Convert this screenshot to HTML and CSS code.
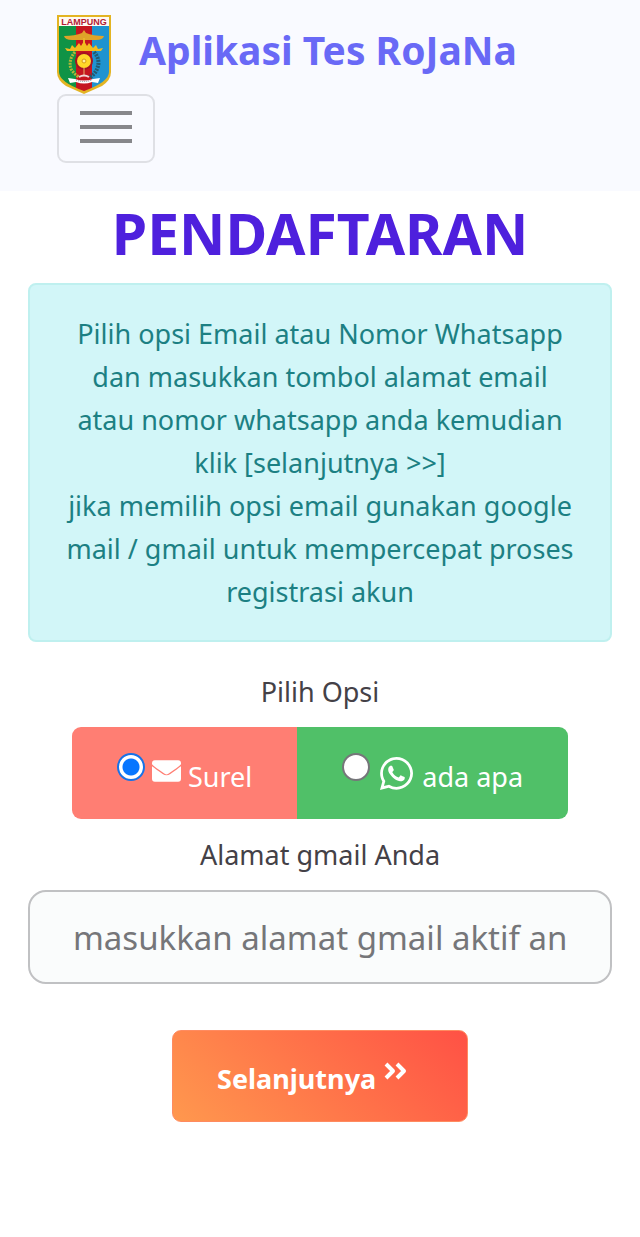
FILE: index.html
```html
<!DOCTYPE html>
<html lang="id">
<head>
<meta charset="utf-8">
<meta name="viewport" content="width=device-width, initial-scale=1">
<title>Aplikasi Tes RoJaNa</title>
<link rel="stylesheet" href="styles.css">
</head>
<body>
<header class="navbar">
  <a class="brand" href="#">
    <svg class="brand-logo" viewBox="0 0 54 80" role="img" aria-label="Lampung">
      <defs>
        <clipPath id="shield"><path d="M2 12H52V58Q52 68 27 77Q2 68 2 58Z"/></clipPath>
      </defs>
      <path d="M0 1H54V58Q54 66 45 72L27 80L9 72Q0 66 0 58Z" fill="#e3b423"/>
      <g clip-path="url(#shield)">
        <path d="M2 12H19V80H2Z" fill="#0f9346"/>
        <path d="M19 12H35V80H19Z" fill="#c5151f"/>
        <path d="M35 12H52V80H35Z" fill="#1f93d0"/>
      </g>
      <path d="M2 3H52V12H2Z" fill="#fffaf2"/>
      <text class="logo-text" x="27" y="11" text-anchor="middle">LAMPUNG</text>
      <path d="M7 22Q18 22 25 19L27 16L29 19Q36 22 47 22Q46 26 39 26H15Q8 26 7 22Z" fill="#dfa329"/>
      <path d="M26 24H28V34H26Z" fill="#e9b52a"/>
      <path d="M8 34L13 35L15 31L18 34L22 29L24 32L27 27L30 32L32 29L36 34L39 31L41 35L46 34L44 37H10Z" fill="#f3bd20"/>
      <path d="M18 38Q11 46 14 55Q17 60 22 63" fill="none" stroke="#b0b739" stroke-width="3" stroke-dasharray="2 1"/>
      <path d="M37 38Q44 46 40 55Q38 60 33 63" fill="none" stroke="#235b70" stroke-width="4" stroke-dasharray="2 1"/>
      <circle cx="27" cy="47" r="9" fill="#a51322"/>
      <circle cx="27" cy="47" r="7" fill="#ffd829"/>
      <circle cx="27" cy="47" r="2" fill="#fff0a0" stroke="#d89b13"/>
      <path d="M27 54V61" stroke="#e6b36b"/>
      <path d="M22 63Q27 60 32 63" fill="none" stroke="#f3d6d6" stroke-width="2"/>
      <path d="M11 64L18 65Q27 68 36 65L43 64L41 69L35 68Q27 71 19 68L13 69Z" fill="#fff"/>
      <path d="M19 66Q27 69 35 66" fill="none" stroke="#8b8289" stroke-dasharray="1 1"/>
    </svg>
    <span>Aplikasi Tes RoJaNa</span>
  </a>
  <button class="menu-toggle" type="button" aria-label="Menu">
    <span class="menu-bar"></span><span class="menu-bar"></span><span class="menu-bar"></span>
  </button>
</header>
<main class="page">
  <h1 class="title">PENDAFTARAN</h1>
  <p class="notice">Pilih opsi Email atau Nomor Whatsapp<br>dan masukkan tombol alamat email<br>atau nomor whatsapp anda kemudian<br>klik [selanjutnya &gt;&gt;]<br>jika memilih opsi email gunakan google<br>mail / gmail untuk mempercepat proses<br>registrasi akun</p>
  <form class="form">
    <fieldset class="options">
      <legend class="label">Pilih Opsi</legend>
      <div class="option-group">
        <label class="option option-mail">
          <input class="radio" type="radio" name="opsi" checked>
          <svg class="mail-icon" viewBox="0 0 30 22" aria-hidden="true"><path fill="#fff" d="M3 0H27Q30 0 30 3V4Q27 7 18 13Q15 16 12 13Q3 7 0 4V3Q0 0 3 0ZM0 6Q4 9 11 14Q15 17 19 14Q26 9 30 6V19Q30 22 27 22H3Q0 22 0 19Z"/></svg>
          <span class="option-text">Surel</span>
        </label>
        <label class="option option-chat">
          <input class="radio" type="radio" name="opsi">
          <svg class="chat-icon" viewBox="0 0 448 448" aria-hidden="true"><path fill="#fff" d="M380.900 65.100C339 23.100 283.200 0 223.900 0 101.500 0 1.900 99.600 1.900 222c0 39.100 10.200 77.300 29.600 111L0 448l117.700-30.900c32.400 17.700 68.900 27 106.100 27h.1c122.300 0 224.100-99.600 224.100-222 0-59.300-25.200-115-67.100-157zM223.900 406.700c-33.200 0-65.700-8.900-94-25.700l-6.700-4-69.800 18.300L72 327.200l-4.400-7c-18.500-29.400-28.200-63.300-28.200-98.200 0-101.700 82.800-184.500 184.600-184.500 49.300 0 95.600 19.200 130.400 54.100s56.200 81.200 56.100 130.500c0 101.800-84.900 184.600-186.600 184.600zM325.100 268.500c-5.500-2.800-32.800-16.200-37.900-18-5.100-1.900-8.800-2.800-12.500 2.800s-14.300 18-17.600 21.800c-3.200 3.700-6.500 4.200-12 1.400-32.600-16.300-54-29.100-75.500-66-5.700-9.800 5.700-9.100 16.300-30.300 1.800-3.700.9-6.900-.5-9.700s-12.500-30.100-17.100-41.200c-4.500-10.800-9.100-9.300-12.500-9.500-3.200-.2-6.900-.2-10.600-.2s-9.700 1.400-14.800 6.900c-5.100 5.600-19.400 19-19.400 46.300s19.900 53.700 22.600 57.400c2.800 3.700 39.100 59.700 94.800 83.800 35.200 15.200 49 16.500 66.600 13.900 10.700-1.600 32.800-13.400 37.400-26.400s4.600-24.100 3.200-26.400c-1.300-2.500-5-3.900-10.500-6.600z"/></svg>
          <span class="option-text">ada apa</span>
        </label>
      </div>
    </fieldset>
    <label class="label" for="email">Alamat gmail Anda</label>
    <input class="email" id="email" type="text" placeholder="masukkan alamat gmail aktif an">
    <button class="next" type="button">Selanjutnya
      <svg class="next-icon" viewBox="0 0 24 20" aria-hidden="true"><path d="M3 3L10 10L3 17M14 3L21 10L14 17" fill="none" stroke="#fff" stroke-width="4" stroke-linejoin="round"/></svg>
    </button>
  </form>
</main>
</body>
</html>
```
FILE: styles.css
```css
* { box-sizing: border-box; }

body {
  margin: 0;
  background: #fff;
  color: #444147;
  font-family: "Noto Sans", "Open Sans", sans-serif;
  font-size: 27px;
  line-height: 43px;
}

.navbar {
  display: flex;
  flex-direction: column;
  align-items: flex-start;
  padding: 14px 57px 28px;
  background: #f9faff;
}

.brand {
  display: flex;
  align-items: center;
  gap: 28px;
  color: #6969f6;
  font-size: 39px;
  font-weight: 700;
  white-space: nowrap;
  text-decoration: none;
}

.brand span { padding-bottom: 10px; }

.brand-logo {
  flex: none;
  width: 54px;
  height: 80px;
}

.logo-text {
  fill: #b32036;
  font-family: "Liberation Sans", sans-serif;
  font-size: 9px;
  font-weight: 700;
}

.menu-toggle {
  display: flex;
  flex-direction: column;
  align-items: center;
  justify-content: flex-start;
  gap: 10px;
  width: 98px;
  height: 69px;
  padding: 15px 0;
  border: 2px solid #dfe0e5;
  border-radius: 9px;
  background: transparent;
}

.menu-bar {
  flex: none;
  width: 52px;
  height: 4px;
  background: #87878b;
}

.page { padding: 6px 28px 116px; }

.title {
  margin: 0 0 14px;
  color: #4e20dd;
  font-size: 57px;
  line-height: 72px;
  text-align: center;
}

.notice {
  margin: 0 0 28px;
  padding: 27px 16px;
  border: 2px solid #bff0ef;
  border-radius: 8px;
  background: #d2f6f8;
  color: #1c8083;
  text-align: center;
}

.form {
  display: flex;
  flex-direction: column;
  align-items: center;
}

.options {
  min-width: 0;
  margin: 0 0 14px;
  padding: 0;
  border: 0;
}

.label {
  padding: 0;
  text-align: center;
}

.options .label { margin: 0 auto 14px; }

.option-group {
  display: flex;
  overflow: hidden;
  border-radius: 9px;
}

.option {
  display: flex;
  align-items: center;
  height: 92px;
  padding: 0 45px;
  color: #fff;
}

.option-mail { background: #ff7e73; }
.option-chat { background: #50c068; }

.radio {
  flex: none;
  width: 28px;
  height: 28px;
  margin: 0 7px 12px 0;
  border: 2px solid #76767a;
  border-radius: 50%;
  background: #fff;
  appearance: none;
}

.radio:checked {
  border-color: #1672e8;
  background: radial-gradient(circle, #0876ff 8px, #fff 9px);
}

.option-text { padding-top: 6px; }

.mail-icon {
  width: 29px;
  height: 22px;
  margin: 0 7px 4px 0;
}

.chat-icon {
  width: 33px;
  height: 33px;
  margin: 0 9px 0 3px;
}

.email {
  width: 100%;
  height: 94px;
  margin: 14px 0 46px;
  padding: 0 43px;
  border: 2px solid #c0c1c3;
  border-radius: 18px;
  background: #fafcfc;
  color: #444147;
  font: inherit;
  font-size: 33px;
}

.email::placeholder {
  color: #757679;
  opacity: 1;
}

.next {
  display: flex;
  align-items: center;
  gap: 7px;
  min-width: 296px;
  height: 92px;
  padding: 4px 44px 0;
  border: 1px solid #ff8b60;
  border-radius: 9px;
  background: linear-gradient(45deg, #ff984e, #ff5145);
  color: #fff;
  font: inherit;
  font-weight: 700;
}

.next-icon {
  width: 24px;
  height: 20px;
  margin-bottom: 14px;
}
```
